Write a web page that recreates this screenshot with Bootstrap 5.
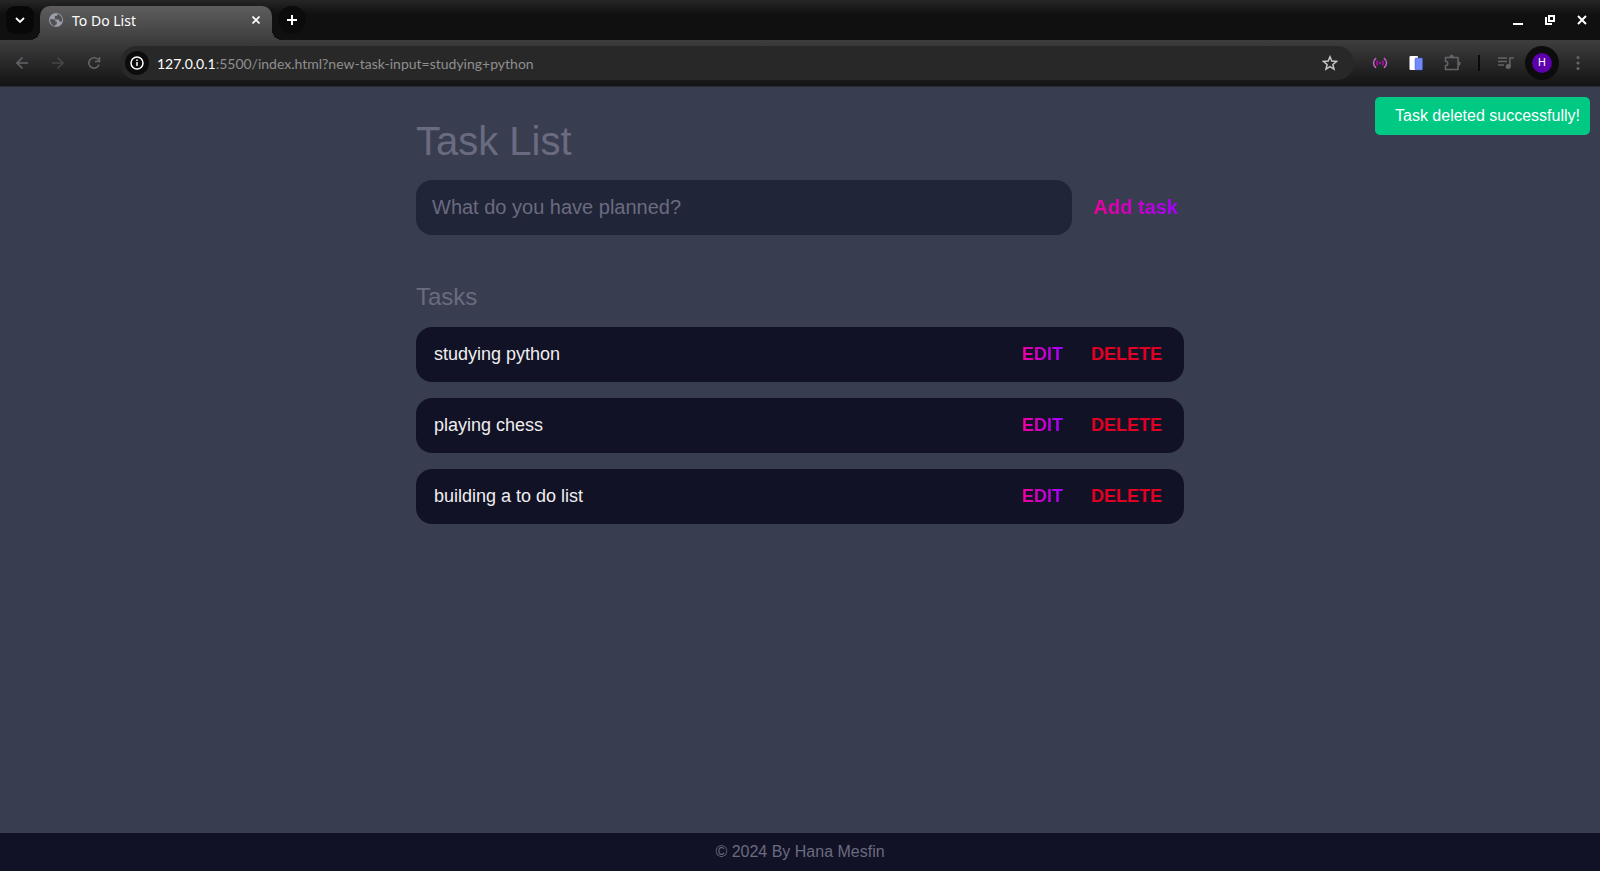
<!DOCTYPE html>
<html lang="en">
<head>
<meta charset="utf-8">
<meta name="viewport" content="width=device-width, initial-scale=1">
<title>To Do List</title>
<link href="https://cdn.jsdelivr.net/npm/bootstrap@5.3.0/dist/css/bootstrap.min.css" rel="stylesheet">
<style>
  body { background: #393d50; font-family: "Liberation Sans", Arial, sans-serif; color: #6a6b80; }
  button { background: none; border: 0; padding: 0; color: inherit; }
  svg { display: block; }

  /* browser window */
  .window-frame { font-family: Lato, "Noto Sans", sans-serif; }
  .tab-strip { height: 40px; padding: 0 2px 0 6px; background: linear-gradient(#262626, #101010 14px); color: #fff; }
  .tab-menu { width: 28px; height: 28px; border-radius: 9px; background: #080808; }
  .tab-new { width: 28px; height: 28px; border-radius: 50%; background: #0b0b0b; margin-left: 6px; }
  .page-tab { width: 232px; height: 34px; margin-left: 6px; padding: 0 8px 6px; border-radius: 10px 10px 0 0; background: linear-gradient(#5e5e5e, #3e3e3e); font-family: "Noto Sans", sans-serif; font-size: 14px; position: relative; }
  .page-tab::before, .page-tab::after { content: ""; position: absolute; bottom: 0; width: 10px; height: 10px; }
  .page-tab::before { right: 100%; background: radial-gradient(circle at 0 0, transparent 10px, #404040 10px); }
  .page-tab::after { left: 100%; background: radial-gradient(circle at 100% 0, transparent 10px, #404040 10px); }
  .win-btn { width: 32px; height: 28px; }
  .tool-strip { height: 47px; padding: 0 4px; background: linear-gradient(#3e3e3e, #131313); border-bottom: 1px solid #2b2c33; color: #63646a; }
  .tool-btn { width: 36px; height: 34px; }
  .address { height: 34px; border-radius: 17px; background: #282828; padding: 0 16px 0 5px; }
  .site-info { width: 24px; height: 24px; border-radius: 50%; background: #0c0c0c; color: #fff; }
  .url { font-size: 14px; color: #8f8f8f; }
  .url b { color: #fff; font-weight: 400; }
  .divider { width: 2px; height: 16px; background: #0a0a0a; }
  .profile { width: 34px; height: 34px; margin: 0 1px; border-radius: 50%; background: #0c0c0c; }
  .profile span { width: 20px; height: 20px; border-radius: 50%; background: #5b00ab; color: #fff; font: 11px/20px Roboto, sans-serif; }

  /* to do page */
  .todo { max-width: 800px; padding: 0 16px; }
  .todo h1 { font-size: 40px; font-weight: 400; line-height: 46px; margin: 31px 0 16px; }
  .todo h2 { font-size: 24px; font-weight: 400; line-height: 28px; margin: 48px 0 16px; }
  .entry { height: 55px; min-width: 0; border: 0; border-radius: 16px; background: #212538; color: #eee; font-size: 20px; padding: 0 16px; }
  .entry::placeholder { color: #6a6b80; }
  .task { height: 55px; border-radius: 16px; background: #121226; color: #eee; font-size: 18px; padding: 0 22px 0 18px; }
  .grad-text { background: linear-gradient(to right, #f0009a, #a200ff); -webkit-background-clip: text; background-clip: text; color: transparent; }
  .add { font-size: 20px; font-weight: 700; line-height: 23px; margin: 0 6px 0 22px; }
  .act { font-size: 18px; font-weight: 700; }
  .delete { color: #e00024; margin-left: 28px; }
  .notice { top: 10px; right: 10px; padding: 10px 10px 10px 20px; border-radius: 5px; background: #00c983; color: #fff; font-size: 16px; line-height: 18px; }
  .page-foot { height: 38px; background: #121226; font-size: 16px; }
</style>
<script src="https://cdn.jsdelivr.net/npm/bootstrap@5.3.0/dist/js/bootstrap.bundle.min.js"></script>
</head>
<body class="d-flex flex-column min-vh-100">
<header class="window-frame">
  <div class="tab-strip d-flex align-items-center">
    <button class="tab-menu d-flex align-items-center justify-content-center" aria-label="Search tabs"><svg width="10" height="10" viewBox="0 0 10 10" fill="none" stroke="#fff" stroke-width="1.8"><path d="M1 3l4 4 4-4"/></svg></button>
    <div class="page-tab d-flex align-items-center align-self-end">
      <svg class="me-2" width="16" height="16" viewBox="0 0 16 16"><circle cx="8" cy="8" r="7" fill="#9a9ea8"/><path d="M2 7.300h3.700q1.600 0 1.600 1.500v.6h1.500v2.200q0 1-1 1.100h-.8v1.500q-4.700-.8-5-6.900zM9.300 1.900v1.200q0 .9-1 .9h-1.400v1.400q0 .8-.8.800H7v1.400h3.400q.8 0 .8.800v1.200h2.800q.8-3.700-1.200-5.700-1.500-1.600-3.500-2z" fill="#4f5054"/></svg>
      <span class="flex-grow-1">To Do List</span>
      <button aria-label="Close tab" class="d-flex p-1"><svg width="8" height="8" viewBox="0 0 8 8" stroke="#fff" stroke-width="1.600"><path d="M.5.5l7 7m0-7l-7 7"/></svg></button>
    </div>
    <button class="tab-new d-flex align-items-center justify-content-center" aria-label="New tab"><svg width="10" height="10" viewBox="0 0 10 10" stroke="#fff" stroke-width="2"><path d="M0 5h10M5 0v10"/></svg></button>
    <div class="d-flex align-items-center ms-auto">
      <button aria-label="Minimize" class="win-btn d-flex align-items-center justify-content-center"><svg width="10" height="10" viewBox="0 0 10 10"><path fill="#fff" d="M0 8h10v2H0z"/></svg></button>
      <button aria-label="Restore" class="win-btn d-flex align-items-center justify-content-center"><svg width="10" height="10" viewBox="0 0 10 10"><path d="M4 1h5v5H4zM1 2v7h6" fill="none" stroke="#fff" stroke-width="2"/></svg></button>
      <button aria-label="Close" class="win-btn d-flex align-items-center justify-content-center"><svg width="10" height="10" viewBox="0 0 10 10"><path d="M1 1l8 8m0-8L1 9" stroke="#fff" stroke-width="2"/></svg></button>
    </div>
  </div>
  <div class="tool-strip d-flex align-items-center">
    <button aria-label="Back" class="tool-btn d-flex align-items-center justify-content-center"><svg width="16" height="16" viewBox="0 0 16 16" fill="none" stroke="currentColor" stroke-width="1.600"><path d="M14 8H3m5.500-5.500L3 8l5.500 5.500"/></svg></button>
    <button aria-label="Forward" class="tool-btn d-flex align-items-center justify-content-center opacity-50"><svg width="16" height="16" viewBox="0 0 16 16" fill="none" stroke="currentColor" stroke-width="1.600"><path d="M2 8h11M7.500 2.500L13 8l-5.500 5.500"/></svg></button>
    <button aria-label="Reload" class="tool-btn d-flex align-items-center justify-content-center"><svg width="16" height="16" viewBox="0 0 16 16" fill="none" stroke="currentColor" stroke-width="1.600"><path d="M13 9.500a5.200 5.200 0 1 1-1.200-5.200L13.500 6M13.500 2v4.500H9"/></svg></button>
    <div class="address flex-grow-1 d-flex align-items-center mx-2">
      <button class="site-info d-flex align-items-center justify-content-center" aria-label="Site information"><svg width="14" height="14" viewBox="0 0 14 14" fill="none" stroke="#fff" stroke-width="1.500"><circle cx="7" cy="7" r="6"/><path d="M7 6v4M7 3.500V5"/></svg></button>
      <span class="url ms-2 flex-grow-1"><b>127.0.0.1</b>:5500/index.html?new-task-input=studying+python</span>
      <button aria-label="Bookmark"><svg width="16" height="16" viewBox="0 0 16 16" fill="none" stroke="#c7c7c7" stroke-width="1.500"><path d="M8 1.800l1.800 4.300 4.700.4-3.600 3 1.100 4.600L8 11.700l-4 2.400 1.100-4.600-3.600-3 4.700-.4z"/></svg></button>
    </div>
    <button aria-label="Live reload extension" class="tool-btn d-flex align-items-center justify-content-center"><svg width="16" height="16" viewBox="0 0 16 16" fill="none" stroke-width="1.500"><path d="M4 3q-5 5 0 10M12 3q5 5 0 10" stroke="#c063c4"/><path d="M5.700 5.500q-2 2.500 0 5M10.300 5.500q2 2.500 0 5" stroke="#a010a8"/><circle cx="8" cy="8" r="1.300" fill="#a010a8"/></svg></button>
    <button aria-label="Copy extension" class="tool-btn d-flex align-items-center justify-content-center"><svg width="16" height="16" viewBox="0 0 16 16"><rect x="1.500" y="1" width="8.500" height="14" rx="1" fill="#fff"/><rect x="7" y="3" width="7.500" height="12" rx="1" fill="#7189fa" stroke="#4a5bc4" stroke-width=".5"/></svg></button>
    <button aria-label="Extensions" class="tool-btn d-flex align-items-center justify-content-center"><svg width="18" height="18" viewBox="0 0 18 18"><path d="M2.500 3.500H15v12H2.500v-3.700q2.300-.3 2.300-2.300T2.500 7.200z" fill="none" stroke="currentColor" stroke-width="1.600" stroke-linejoin="round"/><path d="M6.500 3a2.200 2.200 0 0 1 4.400 0zM15.500 7.300a2.200 2.200 0 0 1 0 4.400z" fill="currentColor"/></svg></button>
    <span class="divider mx-2"></span>
    <button aria-label="Media controls" class="tool-btn d-flex align-items-center justify-content-center"><svg width="16" height="16" viewBox="0 0 16 16"><path d="M0 3h9M0 6.500h9M0 10h6M11.900 12V3H16" fill="none" stroke="currentColor" stroke-width="1.600"/><circle cx="10.200" cy="11.500" r="2.500" fill="currentColor"/></svg></button>
    <button aria-label="Profile" class="profile d-flex align-items-center justify-content-center"><span>H</span></button>
    <button aria-label="Menu" class="tool-btn d-flex align-items-center justify-content-center"><svg width="16" height="16" viewBox="0 0 16 16" fill="currentColor"><circle cx="8" cy="2.500" r="1.600"/><circle cx="8" cy="8" r="1.600"/><circle cx="8" cy="13.500" r="1.600"/></svg></button>
  </div>
</header>
<div class="position-relative flex-grow-1 d-flex flex-column">
  <div class="notice position-absolute" role="status">Task deleted successfully!</div>
  <main class="todo w-100 mx-auto flex-grow-1">
    <h1>Task List</h1>
    <form class="d-flex align-items-center">
      <input class="entry flex-grow-1" type="text" aria-label="New task" placeholder="What do you have planned?">
      <button class="add grad-text" type="submit">Add task</button>
    </form>
    <h2>Tasks</h2>
    <ul class="list-unstyled d-flex flex-column gap-3">
      <li class="task d-flex align-items-center"><span class="flex-grow-1">studying python</span><button class="act grad-text">EDIT</button><button class="act delete">DELETE</button></li>
      <li class="task d-flex align-items-center"><span class="flex-grow-1">playing chess</span><button class="act grad-text">EDIT</button><button class="act delete">DELETE</button></li>
      <li class="task d-flex align-items-center"><span class="flex-grow-1">building a to do list</span><button class="act grad-text">EDIT</button><button class="act delete">DELETE</button></li>
    </ul>
  </main>
  <footer class="page-foot d-flex align-items-center justify-content-center">© 2024 By Hana Mesfin</footer>
</div>
</body>
</html>
